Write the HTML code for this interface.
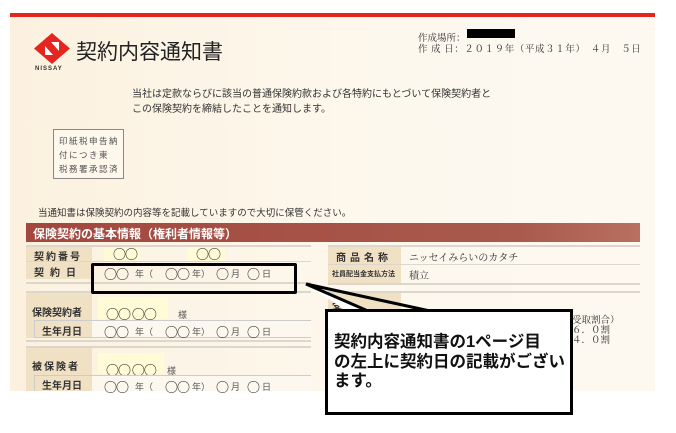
<!DOCTYPE html>
<html><head><meta charset="utf-8"><style>
*{margin:0;padding:0;box-sizing:border-box}
body{width:676px;height:433px;background:#fff;position:relative;overflow:hidden;font-family:"Liberation Sans","Noto Sans CJK JP",sans-serif;color:#333}
.a{position:absolute;white-space:nowrap}
.doc{left:10px;top:13px;width:645px;height:378px;background:linear-gradient(90deg,#fcf1df,#fdf8ee 60%,#fdf9f1)}
.red{left:10px;top:13px;width:645px;height:4px;background:#e42520}
.serif{font-family:"Liberation Serif","Noto Serif CJK SC",serif}
.lbl{background:#f0e0c4;font-weight:bold;font-size:10px;color:#333}
.ln{height:2px;background:#dcd6cc}
.y{background:#fffbd6}
.c{font-family:"Noto Sans CJK JP",sans-serif;font-size:13px;color:#111;letter-spacing:-1px}
.s{font-size:9px;color:#555}
.d{position:absolute;left:0;height:16px;width:200px}
.d span{position:absolute;top:0}
.d .s{top:3px}
</style></head><body>
<div class="a doc"></div>
<div class="a red"></div>
<svg class="a" style="left:34px;top:33px" width="36" height="31" viewBox="0 0 36 31">
<polygon points="18,0 36,15.5 18,31 0,15.5" fill="#e42520"/>
<polygon points="11,9 25,9 25,22 11,22" fill="#fff"/>
<polygon points="11,9 17,9 25,18 25,22 19,22 11,13" fill="#e42520"/>
</svg>
<div class="a" style="left:35px;top:66px;font-size:6px;font-weight:bold;letter-spacing:1px;color:#333">NISSAY</div>
<div class="a" style="left:76px;top:36px;font-size:21px;color:#222">契約内容通知書</div>
<div class="a serif" style="left:418px;top:30px;font-size:9.5px">作成場所：</div>
<div class="a" style="left:467px;top:29px;width:48px;height:9px;background:#000"></div>
<div class="a serif" style="left:418px;top:41px;font-size:9.5px;letter-spacing:.6px">作 成 日：２０１９年（平成３１年）　４月　５日</div>
<div class="a" style="left:132px;top:87px;font-size:10px;line-height:15px;color:#333">当社は定款ならびに該当の普通保険約款および各特約にもとづいて保険契約者と<br>この保険契約を締結したことを通知します。</div>
<div class="a" style="left:53px;top:129px;width:71px;height:50px;border:1px solid #888;background:#fdf7ec;font-size:8.5px;line-height:14px;padding:4px 0 0 5px;letter-spacing:1.5px;color:#555">印紙税申告納<br>付につき東<br>税務署承認済</div>
<div class="a" style="left:38px;top:205px;font-size:9.5px;color:#333">当通知書は保険契約の内容等を記載していますので大切に保管ください。</div>
<div class="a" style="left:26px;top:223px;width:614px;height:19px;background:linear-gradient(90deg,#a2483e,#a95a4c 80%,#b87060);color:#fff;font-weight:bold;font-size:12px;padding:2px 0 0 7px">保険契約の基本情報（権利者情報等）</div>
<!-- left table -->
<div class="a ln" style="left:26px;top:245px;width:285px"></div>
<div class="a lbl" style="left:26px;top:247px;width:66px;height:15px;padding:1px 0 0 8px;letter-spacing:2px">契約番号</div>
<div class="a ln" style="left:26px;top:261px;width:285px;height:1px"></div>
<div class="a lbl" style="left:26px;top:262px;width:66px;height:17px;padding:2px 0 0 8px;letter-spacing:6px">契約日</div>
<div class="a ln" style="left:26px;top:282px;width:285px"></div>
<div class="a y" style="left:104px;top:248px;width:36px;height:13px"></div>
<div class="a y" style="left:187px;top:248px;width:38px;height:13px"></div>
<div class="a c" style="left:113px;top:244px">○○</div>
<div class="a c" style="left:196px;top:244px">○○</div>
<div class="a" style="left:0;top:264px"><div class="d"><span class="c" style="left:104px">○○</span><span class="s" style="left:135px">年（</span><span class="c" style="left:165px">○○</span><span class="s" style="left:192px">年）</span><span class="c" style="left:216px">○</span><span class="s" style="left:231px">月</span><span class="c" style="left:247px">○</span><span class="s" style="left:262px">日</span></div></div>
<div class="a ln" style="left:26px;top:291px;width:285px"></div>
<div class="a lbl" style="left:26px;top:293px;width:66px;height:45px;padding:11px 0 0 6px">保険契約者</div>
<div class="a y" style="left:98px;top:297px;width:70px;height:22px"></div>
<div class="a c" style="left:106px;top:304px">○○ ○○</div>
<div class="a s" style="left:178px;top:308px">様</div>
<div class="a" style="left:34px;top:320px;width:277px;height:18px;border:1px solid #ccc;border-right:none;background:#fdf8ef"></div>
<div class="a lbl" style="left:35px;top:321px;width:57px;height:16px;padding:2px 0 0 7px">生年月日</div>
<div class="a" style="left:0;top:322px"><div class="d"><span class="c" style="left:104px">○○</span><span class="s" style="left:135px">年（</span><span class="c" style="left:165px">○○</span><span class="s" style="left:192px">年）</span><span class="c" style="left:216px">○</span><span class="s" style="left:231px">月</span><span class="c" style="left:247px">○</span><span class="s" style="left:262px">日</span></div></div>
<div class="a ln" style="left:26px;top:340px;width:285px"></div>
<div class="a ln" style="left:26px;top:346px;width:285px"></div>
<div class="a lbl" style="left:26px;top:348px;width:66px;height:43px;padding:10px 0 0 6px;letter-spacing:2px">被保険者</div>
<div class="a y" style="left:98px;top:353px;width:66px;height:20px"></div>
<div class="a c" style="left:106px;top:360px">○○ ○○</div>
<div class="a s" style="left:167px;top:364px">様</div>
<div class="a" style="left:34px;top:375px;width:277px;height:16px;border:1px solid #ccc;border-right:none;border-bottom:none;background:#fdf8ef"></div>
<div class="a lbl" style="left:35px;top:376px;width:57px;height:15px;padding:1px 0 0 7px">生年月日</div>
<div class="a" style="left:0;top:377px"><div class="d"><span class="c" style="left:104px">○○</span><span class="s" style="left:135px">年（</span><span class="c" style="left:165px">○○</span><span class="s" style="left:192px">年）</span><span class="c" style="left:216px">○</span><span class="s" style="left:231px">月</span><span class="c" style="left:247px">○</span><span class="s" style="left:262px">日</span></div></div>
<!-- right table -->
<div class="a ln" style="left:328px;top:245px;width:312px"></div>
<div class="a lbl" style="left:328px;top:247px;width:73px;height:18px;padding:2px 0 0 8px;letter-spacing:4px">商品名称</div>
<div class="a serif" style="left:409px;top:249px;font-size:10px">ニッセイみらいのカタチ</div>
<div class="a ln" style="left:328px;top:264px;width:312px;height:1px"></div>
<div class="a lbl" style="left:328px;top:265px;width:73px;height:18px;padding:4px 0 0 4px;font-size:7px">社員配当金支払方法</div>
<div class="a serif" style="left:409px;top:267px;font-size:10px">積立</div>
<div class="a ln" style="left:328px;top:283px;width:312px"></div>
<div class="a ln" style="left:328px;top:291px;width:312px"></div>
<div class="a lbl" style="left:328px;top:293px;width:73px;height:20px;padding:4px 0 0 4px">受</div>
<div class="a serif" style="left:572px;top:316px;font-size:9.5px;line-height:10px">受取割合）<br>６．０割<br>４．０割</div>
<!-- highlight box -->
<div class="a" style="left:91px;top:263px;width:206px;height:31px;border:3px solid #000;border-radius:2px"></div>
<!-- callout -->
<svg class="a" style="left:300px;top:280px" width="140" height="40">
<polygon points="6,4 72,32 130,32 130,40 60,40" fill="#fff"/>
<polyline points="68,31 6,4 130,31" fill="none" stroke="#000" stroke-width="3"/>
</svg>
<div class="a" style="left:325px;top:309px;width:248px;height:106px;border:3px solid #000;background:#fff"></div>
<div class="a" style="left:334px;top:333px;font-size:16.5px;line-height:19.5px;font-weight:bold;color:#111;white-space:normal;width:235px">契約内容通知書の1ページ目<br>の左上に契約日の記載がござい<br>ます。</div>
</body></html>
